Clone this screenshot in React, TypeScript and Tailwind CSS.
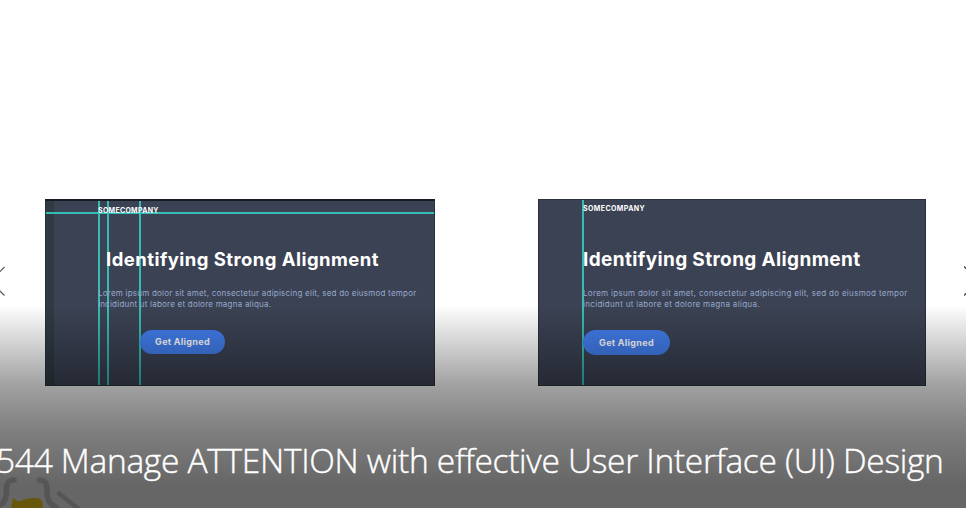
type SlideProps = {
  card: string;
  logo: string;
  heading: string;
  copy: string;
  button: string;
  guides: string[];
  band?: boolean;
};

function Slide({ card, logo, heading, copy, button, guides, band }: SlideProps) {
  return (
    <section className={`relative flex h-[187px] shrink-0 flex-col items-start overflow-hidden border border-[#2a313d] bg-[#3b4253] font-['Inter','Open_Sans',sans-serif] whitespace-nowrap ${card}`}>
      {band && <div className="absolute inset-y-0 left-0 w-2 bg-[#303a43]" />}
      {guides.map((g) => (
        <div key={g} className={`absolute bg-[#35bdb5] ${g}`} />
      ))}
      <div className={`relative h-3 font-bold text-white leading-3 ${logo}`}>SOMECOMPANY</div>
      <h2 className={`relative h-7 font-bold text-white leading-7 ${heading}`}>Identifying Strong Alignment</h2>
      <p className={`relative text-[#98a9cd] leading-[11px] ${copy}`}>
        <span className="block">Lorem ipsum dolor sit amet, consectetur adipiscing elit, sed do eiusmod tempor</span>
        <span className="block">incididunt ut labore et dolore magna aliqua.</span>
      </p>
      <button className={`relative flex items-center justify-center rounded-full bg-[#427eee] font-bold text-white tracking-[0.3px] ${button}`}>Get Aligned</button>
    </section>
  );
}

export default function App() {
  return (
    <main className="relative h-[508px] w-[966px] overflow-hidden bg-white">
      <div className="flex gap-[103px] pt-[199px] pl-[45px]">
        <Slide
          band
          card="w-[390px] border-t-2 border-t-[#171b24]"
          logo="mt-[3.5px] ml-[52px] text-[7px] tracking-[0.3px]"
          heading="mt-[28.5px] ml-[60px] text-[18.5px] tracking-[0.45px]"
          copy="mt-[15px] ml-[52px] text-[8px] tracking-[0.23px]"
          button="mt-[20px] ml-[94px] h-[24px] w-[85px] text-[9px]"
          guides={[
            'inset-y-0 left-[52px] w-[1.5px]',
            'inset-y-0 left-[61px] w-[1.5px]',
            'inset-y-0 left-[93px] w-[1.5px]',
            'inset-x-0 top-[11px] h-[2px]',
          ]}
        />
        <Slide
          card="w-[388px]"
          logo="mt-[3px] ml-[44px] text-[7px] tracking-[0.42px]"
          heading="mt-[31px] ml-[44px] text-[19px] tracking-[0.36px]"
          copy="mt-[14px] ml-[44px] text-[8px] tracking-[0.31px]"
          button="mt-[20px] ml-[44px] h-[25px] w-[87px] text-[9px]"
          guides={['inset-y-0 left-[43px] w-[1.5px]']}
        />
      </div>

      <svg className="absolute top-[262px] left-0" width="8" height="38" viewBox="0 0 8 38" fill="none" stroke="#555" strokeWidth="1.2">
        <path d="M4.5 5L-10 19.5L4.5 33.5" />
      </svg>
      <svg className="absolute top-[262px] right-0" width="2" height="38" viewBox="0 0 2 38" fill="none" stroke="#444" strokeWidth="1.3">
        <path d="M0 4.5L14.5 19L0 33.5" />
      </svg>

      <svg className="absolute top-[470px] left-0" width="90" height="38" viewBox="0 0 90 38" fill="none">
        <path d="M13 28C16 30 18 32 21 31C27 28 30 28 36 28C41 28 43 31 43 38H11Z" fill="#ffd91a" />
        <path d="M14 10C8 10 6.5 13 6.5 19C6.5 28 5 33 0 35M39 10C46 10 47 14 47 20C47 30 49 34 56 37" stroke="#d4d4d4" strokeWidth="5.5" strokeLinecap="round" />
        <path d="M59 23.5L80 40" stroke="#d4d4d4" strokeWidth="4.5" strokeLinecap="round" />
      </svg>

      <div className="absolute inset-x-0 top-[305px] bottom-0 bg-[linear-gradient(to_bottom,rgba(0,0,0,0)_0px,rgba(0,0,0,0.37)_80px,rgba(0,0,0,0.5)_125px,rgba(0,0,0,0.6)_180px)]" />
      <h1 className="absolute top-[437px] left-[-4px] font-['Open_Sans','Noto_Sans',sans-serif] text-[33.5px] leading-[46px] font-light tracking-[-0.3px] whitespace-nowrap text-white [-webkit-text-stroke:0.4px_white] [font-variant-ligatures:none]">
        544 Manage ATTENTION with effective User Interface (UI) Design
      </h1>
    </main>
  );
}
